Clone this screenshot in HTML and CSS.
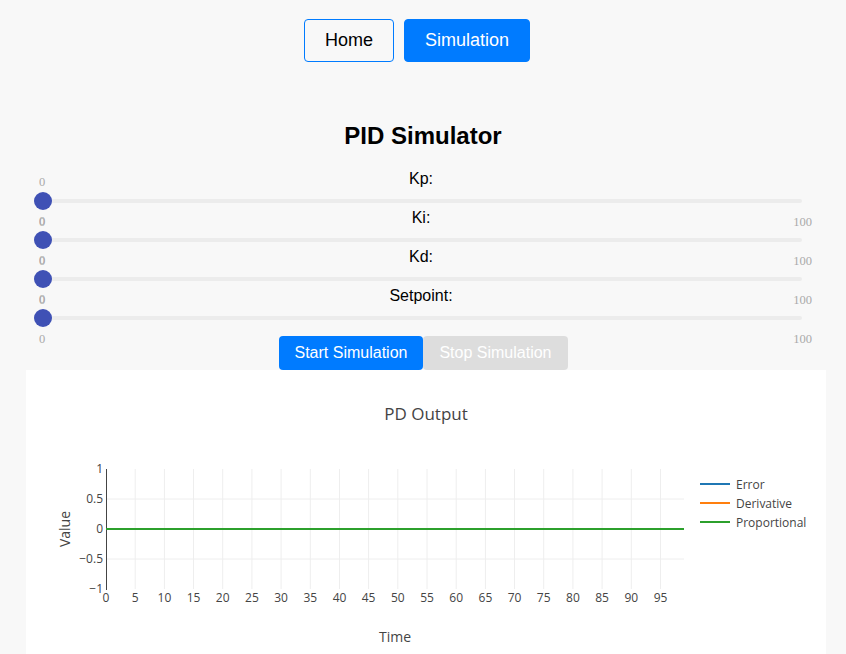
FILE: index.html
```html
<!DOCTYPE html>
<html lang="en">
<head>
<meta charset="utf-8">
<title>PID Simulator</title>
<link rel="stylesheet" href="styles.css">
</head>
<body>
<nav class="nav">
  <button class="nav-btn">Home</button>
  <button class="nav-btn active">Simulation</button>
</nav>

<h1 class="title">PID Simulator</h1>

<section class="params">
  <div class="param">
    <div class="param-label">Kp:</div>
    <div class="slider">
      <div class="track"></div>
      <div class="thumb"></div>
      <span class="val">0</span>
      <span class="min">0</span>
      <span class="max">100</span>
    </div>
  </div>
  <div class="param">
    <div class="param-label">Ki:</div>
    <div class="slider">
      <div class="track"></div>
      <div class="thumb"></div>
      <span class="val">0</span>
      <span class="min">0</span>
      <span class="max">100</span>
    </div>
  </div>
  <div class="param">
    <div class="param-label">Kd:</div>
    <div class="slider">
      <div class="track"></div>
      <div class="thumb"></div>
      <span class="val">0</span>
      <span class="min">0</span>
      <span class="max">100</span>
    </div>
  </div>
  <div class="param">
    <div class="param-label">Setpoint:</div>
    <div class="slider">
      <div class="track"></div>
      <div class="thumb"></div>
      <span class="val">0</span>
      <span class="min">0</span>
      <span class="max">100</span>
    </div>
  </div>
</section>

<div class="controls">
  <button class="ctl start">Start Simulation</button>
  <button class="ctl stop">Stop Simulation</button>
</div>

<div class="chart">
  <svg class="plot" width="800" height="300" viewBox="0 0 800 300">
    <rect x="0" y="0" width="800" height="300" fill="#fff"/>
    <text class="ptitle" x="400" y="50" text-anchor="middle">PD Output</text>
    <g class="grid" stroke="#eeeeee" stroke-width="1">
      <line x1="80" y1="129" x2="658" y2="129"/>
      <line x1="80" y1="189" x2="658" y2="189"/>
      <line x1="109.2" y1="99" x2="109.2" y2="219"/>
      <line x1="138.4" y1="99" x2="138.4" y2="219"/>
      <line x1="167.5" y1="99" x2="167.5" y2="219"/>
      <line x1="196.7" y1="99" x2="196.7" y2="219"/>
      <line x1="225.9" y1="99" x2="225.9" y2="219"/>
      <line x1="255.1" y1="99" x2="255.1" y2="219"/>
      <line x1="284.3" y1="99" x2="284.3" y2="219"/>
      <line x1="313.5" y1="99" x2="313.5" y2="219"/>
      <line x1="342.6" y1="99" x2="342.6" y2="219"/>
      <line x1="371.8" y1="99" x2="371.8" y2="219"/>
      <line x1="401" y1="99" x2="401" y2="219"/>
      <line x1="430.2" y1="99" x2="430.2" y2="219"/>
      <line x1="459.4" y1="99" x2="459.4" y2="219"/>
      <line x1="488.5" y1="99" x2="488.5" y2="219"/>
      <line x1="517.7" y1="99" x2="517.7" y2="219"/>
      <line x1="546.9" y1="99" x2="546.9" y2="219"/>
      <line x1="576.1" y1="99" x2="576.1" y2="219"/>
      <line x1="605.3" y1="99" x2="605.3" y2="219"/>
      <line x1="634.5" y1="99" x2="634.5" y2="219"/>
    </g>
    <line x1="80.5" y1="99" x2="80.5" y2="220" stroke="#444" stroke-width="1"/>
    <line x1="80" y1="159" x2="658" y2="159" stroke="#1f77b4" stroke-width="2"/>
    <line x1="80" y1="159" x2="658" y2="159" stroke="#ff7f0e" stroke-width="2"/>
    <line x1="80" y1="159" x2="658" y2="159" stroke="#2ca02c" stroke-width="2"/>
    <g class="tick" text-anchor="end">
      <text x="77" y="103">1</text>
      <text x="77" y="133">0.5</text>
      <text x="77" y="163">0</text>
      <text x="77" y="193">−0.5</text>
      <text x="77" y="223">−1</text>
    </g>
    <g class="tick" text-anchor="middle">
      <text x="80" y="232">0</text>
      <text x="109.2" y="232">5</text>
      <text x="138.4" y="232">10</text>
      <text x="167.5" y="232">15</text>
      <text x="196.7" y="232">20</text>
      <text x="225.9" y="232">25</text>
      <text x="255.1" y="232">30</text>
      <text x="284.3" y="232">35</text>
      <text x="313.5" y="232">40</text>
      <text x="342.6" y="232">45</text>
      <text x="371.8" y="232">50</text>
      <text x="401" y="232">55</text>
      <text x="430.2" y="232">60</text>
      <text x="459.4" y="232">65</text>
      <text x="488.5" y="232">70</text>
      <text x="517.7" y="232">75</text>
      <text x="546.9" y="232">80</text>
      <text x="576.1" y="232">85</text>
      <text x="605.3" y="232">90</text>
      <text x="634.5" y="232">95</text>
    </g>
    <text class="axtitle" x="369" y="271.5" text-anchor="middle">Time</text>
    <text class="axtitle" x="0" y="0" text-anchor="middle" transform="translate(43.5 159) rotate(-90)">Value</text>
    <g class="legend">
      <line x1="674" y1="114" x2="704" y2="114" stroke="#1f77b4" stroke-width="2"/>
      <text x="710" y="118.5">Error</text>
      <line x1="674" y1="133" x2="704" y2="133" stroke="#ff7f0e" stroke-width="2"/>
      <text x="710" y="137.5">Derivative</text>
      <line x1="674" y1="152" x2="704" y2="152" stroke="#2ca02c" stroke-width="2"/>
      <text x="710" y="156.5">Proportional</text>
    </g>
  </svg>
</div>
</body>
</html>
```

FILE: styles.css
```css
html, body {
  margin: 0;
  padding: 0;
}

body {
  background: #f8f8f8;
  font-family: "Liberation Sans", Arial, sans-serif;
  color: #000;
}

.nav {
  display: flex;
  justify-content: center;
  gap: 10px;
  padding: 19px 12px 0 0;
}

.nav-btn {
  height: 43px;
  padding: 0 20px;
  font-family: "Liberation Sans", Arial, sans-serif;
  font-size: 18px;
  border: 1px solid #007bff;
  border-radius: 4px;
  background: transparent;
  color: #000;
}

.nav-btn.active {
  background: #007bff;
  color: #fff;
}

.title {
  margin: 60px 0 0 0;
  font-size: 24px;
  line-height: 28px;
  font-weight: bold;
  text-align: center;
}

.params {
  margin-top: 19px;
}

.param {
  display: flex;
  flex-direction: column;
  height: 39px;
}

.param-label {
  font-size: 16px;
  line-height: 18px;
  height: 18px;
  text-align: center;
  padding-right: 4px;
  padding-top: 1px;
}

.slider {
  position: relative;
  height: 21px;
  margin: -1px 44px 0 34px;
}

.track {
  margin-top: 12px;
  height: 4px;
  border-radius: 2px;
  background: #ececec;
}

.thumb {
  position: absolute;
  left: 0;
  top: 5px;
  width: 18px;
  height: 18px;
  border-radius: 50%;
  background: #3f51b5;
}

.val, .min, .max {
  position: absolute;
  font-family: "Liberation Serif", "Times New Roman", serif;
  font-size: 12.5px;
  line-height: 14px;
  color: #aaaaaa;
}

.val {
  left: 5px;
  top: -12px;
}

.min {
  left: 5px;
  top: 28px;
}

.max {
  right: -10px;
  top: 28px;
}

.controls {
  display: flex;
  justify-content: center;
  margin-top: 11px;
}

.ctl {
  height: 34px;
  padding: 0 16px;
  font-family: "Liberation Sans", Arial, sans-serif;
  font-size: 16px;
  border: none;
  border-radius: 4px;
  color: #fff;
}

.ctl.start {
  background: #007bff;
}

.ctl.stop {
  background: #dddddd;
}

.chart {
  width: 800px;
  height: 300px;
  margin-left: 26px;
  background: #fff;
}

.plot {
  display: block;
  font-family: "Open Sans", Verdana, Arial, sans-serif;
}

.ptitle {
  font-size: 17px;
  fill: #444;
}

.tick text {
  font-size: 12px;
  fill: #444;
}

.axtitle {
  font-size: 14px;
  fill: #444;
}

.legend text {
  font-size: 12px;
  fill: #444;
}
```
